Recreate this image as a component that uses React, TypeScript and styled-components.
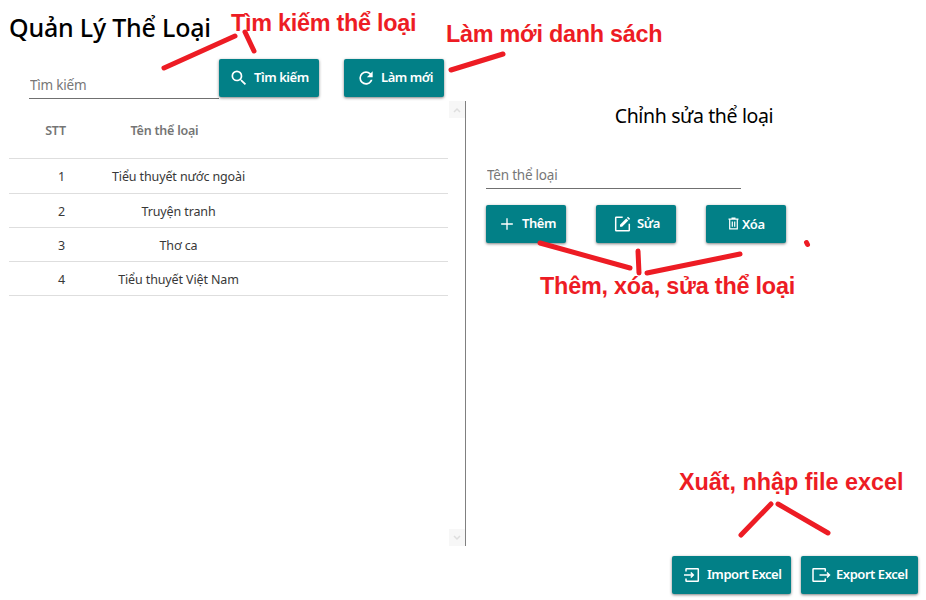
import React from "react";
import styled, { createGlobalStyle } from "styled-components";

const GlobalStyle = createGlobalStyle`
  * { box-sizing: border-box; }
  body { margin: 0; background: #fff; overflow: hidden; }
`;

const Page = styled.main`
  position: relative;
  width: 926px;
  height: 600px;
  padding-left: 9px;
  display: flex;
  flex-direction: column;
  background: #fff;
  color: #000;
  font-family: "Noto Sans", "Open Sans", sans-serif;
  white-space: nowrap;
`;

const Title = styled.h1`
  margin: 0;
  height: 59px;
  font-size: 25px;
  font-weight: 500;
  line-height: 54px;
  letter-spacing: -0.2px;
`;

const SearchBar = styled.div`
  display: flex;
  height: 42px;
  padding-left: 20px;
`;

const Field = styled.input<{ $width: number; $height: number; $top: number }>`
  width: ${(p) => p.$width}px;
  height: ${(p) => p.$height}px;
  padding: ${(p) => p.$top}px 0 0 1px;
  border: 0;
  border-bottom: 1px solid #707070;
  outline: 0;
  background: transparent;
  font: 400 13.5px "Noto Sans", sans-serif;
  letter-spacing: -0.22px;
  &::placeholder { color: #777; opacity: 1; }
`;

const Button = styled.button<{ $width: number; $pad?: number; $gap?: number; $drop?: number }>`
  width: ${(p) => p.$width}px;
  height: 38px;
  padding: ${(p) => p.$drop ?? 0}px 0 0 ${(p) => p.$pad ?? 10}px;
  display: flex;
  align-items: center;
  gap: ${(p) => p.$gap ?? 5}px;
  flex: none;
  border: 0;
  border-radius: 2px;
  background: #028087;
  box-shadow: 0 1px 3px rgba(0, 0, 0, 0.5);
  color: #fff;
  font: 600 13px/18px "Noto Sans", sans-serif;
  letter-spacing: -0.45px;
  svg { flex: none; display: block; }
  & + & { margin-left: var(--button-gap); }
`;

const ButtonText = styled.span`
  padding-bottom: 2px;
`;

const Buttons = styled.div<{ $gap: number }>`
  display: flex;
  --button-gap: ${(p) => p.$gap}px;
`;

const Body = styled.div`
  display: flex;
  height: 445px;
`;

const ListPane = styled.section`
  width: 457px;
  display: flex;
  border-right: 1px solid #808080;
`;

const Table = styled.div`
  width: 439px;
  margin-right: 1px;
`;

const Row = styled.div<{ $height: number; $head?: boolean }>`
  display: grid;
  grid-template-columns: ${(p) => (p.$head ? "93px 125px" : "99px 141px")};
  align-items: center;
  text-align: center;
  height: ${(p) => p.$height}px;
  padding-top: ${(p) => (p.$height === 35 ? 0 : 2)}px;
  padding-left: ${(p) => (p.$head ? 0 : 0)}px;
  border-bottom: 1px solid #dedede;
  font-size: 12.5px;
  font-weight: ${(p) => (p.$head ? 600 : 400)};
  color: ${(p) => (p.$head ? "#757575" : "#383838")};
  letter-spacing: ${(p) => (p.$head ? -0.22 : -0.12)}px;
`;

const Index = styled.span`
  padding-left: 6px;
`;

const ScrollBar = styled.div`
  width: 16px;
  display: flex;
  flex-direction: column;
  justify-content: space-between;
`;

const ScrollButton = styled.div`
  height: 17px;
  display: grid;
  place-items: center;
  background: #f7f7f7;
`;

const EditPane = styled.section`
  width: 456px;
  padding-left: 20px;
  display: flex;
  flex-direction: column;
`;

const EditTitle = styled.h2`
  margin: 0;
  height: 58px;
  padding-right: 20px;
  text-align: center;
  font-size: 19.5px;
  font-weight: 400;
  line-height: 29px;
  letter-spacing: -0.36px;
`;

const EditActions = styled.div`
  padding-top: 16px;
`;

const Footer = styled.footer`
  display: flex;
  justify-content: flex-end;
  padding: 10px 8px 0 0;
`;

const Notes = styled.div`
  position: absolute;
  inset: 0;
  pointer-events: none;
  svg { position: absolute; inset: 0; }
`;

const Note = styled.span<{ $x: number; $y: number; $ls: number }>`
  position: absolute;
  left: ${(p) => p.$x}px;
  top: ${(p) => p.$y}px;
  color: #ed1c24;
  font: 700 23.4px/28px "Liberation Sans", Arial, sans-serif;
  letter-spacing: ${(p) => p.$ls}px;
`;

const icons = {
  search:
    "M9.5,3A6.5,6.5 0 0,1 16,9.5C16,11.11 15.41,12.59 14.44,13.73L14.71,14H15.5L20.5,19L19,20.5L14,15.5V14.71L13.73,14.44C12.59,15.41 11.11,16 9.5,16A6.5,6.5 0 0,1 3,9.5A6.5,6.5 0 0,1 9.5,3M9.5,5C7,5 5,7 5,9.5C5,12 7,14 9.5,14C12,14 14,12 14,9.5C14,7 12,5 9.5,5Z",
  refresh:
    "M17.65,6.35C16.2,4.9 14.21,4 12,4A8,8 0 0,0 4,12A8,8 0 0,0 12,20C15.73,20 18.84,17.45 19.73,14H17.65C16.83,16.33 14.61,18 12,18A6,6 0 0,1 6,12A6,6 0 0,1 12,6C13.66,6 15.14,6.69 16.22,7.78L13,11H20V4L17.65,6.35Z",
  plus: "M19,12.8H12.8V19H11.2V12.8H5V11.2H11.2V5H12.8V11.2H19V12.8Z",
};

const Icon = ({ name }: { name: keyof typeof icons }) => (
  <svg width="20" height="20" viewBox="0 0 24 24" fill="#fff">
    <path d={icons[name]} />
  </svg>
);

const LineIcon = ({ children, width = 20, height = 20 }: { children: React.ReactNode; width?: number; height?: number }) => (
  <svg width={width} height={height} viewBox={`0 0 ${width} ${height}`} fill="none" stroke="#fff" strokeWidth="1.5">
    {children}
  </svg>
);

const rows = ["Tiểu thuyết nước ngoài", "Truyện tranh", "Thơ ca", "Tiểu thuyết Việt Nam"];

const strokes = [
  "M164 68L235 36",
  "M245 32L254 51",
  "M451 70L503 54",
  "M540 243L630 268",
  "M638 251L639 273",
  "M647 273L740 254",
  "M806.500 242.500L807.500 244.500",
  "M771 504L741 535",
  "M778 504L828 533",
];

export default function App() {
  return (
    <Page>
      <GlobalStyle />
      <Title>Quản Lý Thể Loại</Title>
      <SearchBar>
        <Field $width={190} $height={40} $top={13} placeholder="Tìm kiếm" />
        <Buttons $gap={25}>
          <Button $width={100}><Icon name="search" /><ButtonText>Tìm kiếm</ButtonText></Button>
          <Button $width={100} $pad={12}><Icon name="refresh" /><ButtonText>Làm mới</ButtonText></Button>
        </Buttons>
      </SearchBar>
      <Body>
        <ListPane>
          <Table>
            <Row $height={58} $head><span>STT</span><span>Tên thể loại</span></Row>
            {rows.map((name, i) => (
              <Row key={name} $height={i === 0 ? 35 : 34}><Index>{i + 1}</Index><span>{name}</span></Row>
            ))}
          </Table>
          <ScrollBar>
            <ScrollButton>
              <svg width="8" height="6" viewBox="0 0 8 6" fill="none" stroke="#dedede" strokeWidth="1.5"><path d="M1 5L4 2L7 5" /></svg>
            </ScrollButton>
            <ScrollButton>
              <svg width="8" height="6" viewBox="0 0 8 6" fill="none" stroke="#dedede" strokeWidth="1.5"><path d="M1 1L4 4L7 1" /></svg>
            </ScrollButton>
          </ScrollBar>
        </ListPane>
        <EditPane>
          <EditTitle>Chỉnh sửa thể loại</EditTitle>
          <Field $width={255} $height={30} $top={2} placeholder="Tên thể loại" />
          <EditActions>
            <Buttons $gap={30}>
              <Button $width={80} $pad={11}><Icon name="plus" /><ButtonText>Thêm</ButtonText></Button>
              <Button $width={80} $pad={17} $gap={4}>
                <LineIcon>
                  <path d="M9.700 3.200H3.200Q2.700 3.200 2.700 3.700V16.300Q2.700 16.800 3.200 16.800H15.800Q16.300 16.800 16.300 16.300V9.700" />
                  <path d="M7 10.700L13.200 4.500L15.300 6.600L9.100 12.800H7ZM13.900 3.800L15 2.700L17.100 4.800L16 5.900Z" fill="#fff" stroke="none" />
                </LineIcon>
                <ButtonText>Sửa</ButtonText>
              </Button>
              <Button $width={80} $pad={22} $gap={3} $drop={2}>
                <LineIcon width={11} height={17}>
                  <path d="M0.500 2.200H10.500M3.500 1H7.500M1.700 2.500V11.800H9.300V2.500M4.300 4.500V9.700M6.700 4.500V9.700" strokeWidth="1.2" />
                </LineIcon>
                <ButtonText>Xóa</ButtonText>
              </Button>
            </Buttons>
          </EditActions>
        </EditPane>
      </Body>
      <Footer>
        <Buttons $gap={10}>
          <Button $width={119}>
            <LineIcon>
              <path d="M4 6.500V4.200Q4 3.700 4.500 3.700H15.800Q16.300 3.700 16.300 4.200V15.800Q16.300 16.300 15.800 16.300H4.500Q4 16.300 4 15.800V13.500M2 10H11M8.800 7.500L11.300 10L8.800 12.500" />
            </LineIcon>
            <ButtonText>Import Excel</ButtonText>
          </Button>
          <Button $width={117}>
            <LineIcon>
              <path d="M14.300 6.500V4.200Q14.300 3.700 13.800 3.700H2.500Q2 3.700 2 4.200V15.800Q2 16.300 2.500 16.300H13.800Q14.300 16.300 14.300 15.800V13.500M8.500 10H18.500M16 7.500L18.500 10L16 12.500" />
            </LineIcon>
            <ButtonText>Export Excel</ButtonText>
          </Button>
        </Buttons>
      </Footer>
      <Notes>
        <Note $x={231} $y={9} $ls={-0.26}>Tìm kiếm thể loại</Note>
        <Note $x={446} $y={20} $ls={-0.26}>Làm mới danh sách</Note>
        <Note $x={540} $y={272} $ls={-0.22}>Thêm, xóa, sửa thể loại</Note>
        <Note $x={679} $y={468} $ls={-0.02}>Xuất, nhập file excel</Note>
        <svg width="926" height="600" fill="none" stroke="#ed1c24" strokeWidth="5" strokeLinecap="round">
          {strokes.map((d) => <path key={d} d={d} />)}
        </svg>
      </Notes>
    </Page>
  );
}
